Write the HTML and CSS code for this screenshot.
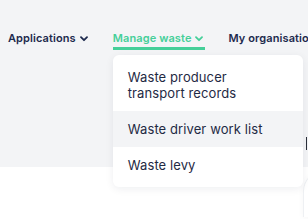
FILE: index.html
```html
<!DOCTYPE html>
<html>
<head>
<meta charset="utf-8">
<link rel="stylesheet" href="styles.css">
</head>
<body>
<div class="page">
  <header class="top">
    <nav class="nav">
      <div class="nav-item">
        <span>Applications</span>
        <svg class="chev" width="8" height="6" viewBox="0 0 8 6"><path d="M1 1.2 L4 4.2 L7 1.2" fill="none" stroke="currentColor" stroke-width="1.8" stroke-linecap="round" stroke-linejoin="round"/></svg>
      </div>
      <div class="nav-item active">
        <span class="label">Manage waste
        <svg class="chev" width="8" height="6" viewBox="0 0 8 6"><path d="M1 1.2 L4 4.2 L7 1.2" fill="none" stroke="currentColor" stroke-width="1.8" stroke-linecap="round" stroke-linejoin="round"/></svg></span>
        <ul class="menu">
          <li class="menu-item">Waste producer<br>transport records</li>
          <li class="menu-item hover">Waste driver work list</li>
          <li class="menu-item">Waste levy</li>
        </ul>
      </div>
      <div class="nav-item">
        <span>My organisation</span>
      </div>
    </nav>
    <span class="edge-mark"></span>
  </header>
  <main class="content">
    <div class="card"></div>
  </main>
</div>
</body>
</html>
```

FILE: styles.css
```css
* { box-sizing: border-box; }
html, body { margin: 0; padding: 0; }
body {
  width: 308px;
  height: 219px;
  overflow: hidden;
  background: #ffffff;
  font-family: "Inter", "Open Sans", sans-serif;
}
.page {
  position: relative;
  width: 308px;
  height: 219px;
  overflow: hidden;
}
.top {
  position: relative;
  background: #f3f4f6;
  height: 167px;
  padding: 30px 0 0 8px;
}
.nav {
  display: flex;
  align-items: flex-start;
  gap: 25px;
  white-space: nowrap;
}
.nav-item {
  position: relative;
  display: flex;
  align-items: center;
  gap: 4px;
  font-size: 11px;
  font-weight: 600;
  color: #1d2a4d;
  line-height: 16px;
  letter-spacing: 0.1px;
}
.nav-item.active { color: #45cf99; margin-right: -2px; }
.nav-item .label {
  display: flex;
  align-items: center;
  gap: 4px;
  padding: 0 2px 1px 0;
  border-bottom: 3px solid #45cf99;
}
.chev { display: block; margin-top: 1px; }
.menu {
  position: absolute;
  top: 25px;
  left: 0;
  width: 190px;
  margin: 0;
  padding: 4px 0;
  list-style: none;
  background: #ffffff;
  border-radius: 6px;
  box-shadow: 0 2px 8px rgba(20, 30, 60, 0.07);
  z-index: 2;
}
.menu-item {
  padding: 10px 15px;
  font-size: 13px;
  font-weight: 400;
  line-height: 16px;
  color: #1f2a44;
  white-space: nowrap;
}
.menu-item.hover { background: #f3f4f6; }
.edge-mark {
  position: absolute;
  right: 1px;
  top: 137px;
  width: 1px;
  height: 13px;
  background: #2a2f3a;
}
.content {
  display: flex;
  justify-content: flex-end;
  padding-top: 4px;
}
.card {
  width: 40px;
  height: 46px;
  margin-right: -35px;
  border-radius: 24px 24px 0 0;
  border: 1px solid #eef0f3;
  border-bottom: 0;
  box-shadow: 0 1px 6px rgba(0, 0, 0, 0.04);
}
```
